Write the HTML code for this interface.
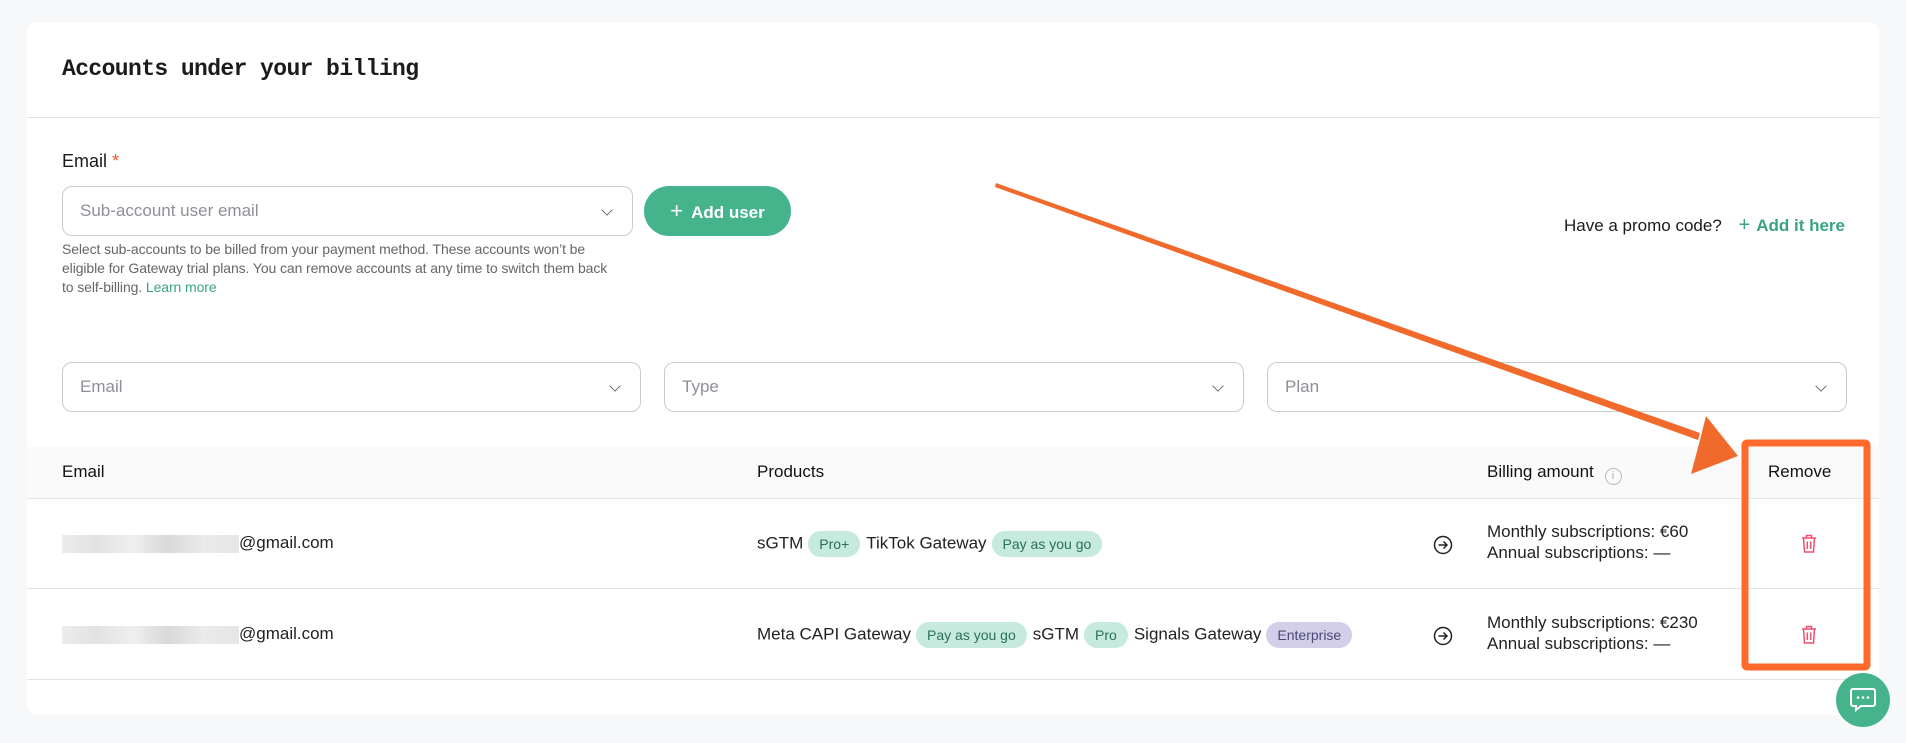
<!DOCTYPE html>
<html><head><meta charset="utf-8"><style>
*{box-sizing:border-box;margin:0;padding:0}
body{width:1906px;height:743px;background:#f7f8fa;font-family:"Liberation Sans",sans-serif;color:#1b1b1b;position:relative;overflow:hidden}
.card{position:absolute;left:27px;top:22px;width:1852px;height:693px;background:#fff;border-radius:10px}
.abs{position:absolute}
.title{left:35px;top:34px;font-family:"Liberation Mono",monospace;font-weight:bold;font-size:23px;letter-spacing:-0.6px}
.sep{left:0;right:0;height:1px;background:#e3e5e8}
.input{border:1px solid #c9cbcf;border-radius:10px;height:50px;font-size:17px;color:#8d9096;padding-left:17px;line-height:48px}
.chev{position:absolute;right:20px;top:18px;width:10px;height:10px;border-right:1.6px solid #555;border-bottom:1.6px solid #555;transform:rotate(45deg) scale(.8)}
.help{font-size:14px;color:#666;line-height:19px;width:555px;letter-spacing:-0.1px}
.btn{background:#45b48c;color:#fff;border-radius:25px;font-weight:bold;font-size:17px;text-align:center;line-height:49px}
.th{font-size:17px;color:#111}
.td{font-size:17px;color:#222}
.badge{display:inline-block;height:26px;line-height:26px;border-radius:13px;padding:0 11px;font-size:14px;background:#c6eadd;color:#2a7058;margin:0 6px 0 5px;vertical-align:middle}
.ent{background:#d3cfe9;color:#4b4878}
.blur{display:inline-block;width:177px;height:18px;background:linear-gradient(90deg,#ececec,#e2e2e2 20%,#efefef 40%,#d9d9d9 60%,#ebebeb 80%,#e6e6e6);vertical-align:middle}
</style></head><body>
<div class="card">
  <div class="abs title">Accounts under your billing</div>
  <div class="abs sep" style="top:95px"></div>
  <div class="abs" style="left:35px;top:129px;font-size:18px">Email <span style="color:#e85a2a">*</span></div>
  <div class="abs input" style="left:35px;top:164px;width:571px">Sub-account user email<div class="chev"></div></div>
  <div class="abs btn" style="left:617px;top:164px;width:147px;height:50px"><span style="font-weight:normal;font-size:22px;margin-right:8px">+</span>Add user</div>
  <div class="abs help" style="left:35px;top:218px">Select sub-accounts to be billed from your payment method. These accounts won’t be eligible for Gateway trial plans. You can remove accounts at any time to switch them back to self-billing. <span style="color:#3aa47f">Learn more</span></div>
  <div class="abs" style="right:34px;top:192px;font-size:17px">Have a promo code? <span style="color:#3aa47f;font-weight:bold;margin-left:12px"><span style="font-weight:normal;font-size:20px;margin-right:6px">+</span>Add it here</span></div>
  <div class="abs input" style="left:35px;top:340px;width:579px">Email<div class="chev"></div></div>
  <div class="abs input" style="left:637px;top:340px;width:580px">Type<div class="chev"></div></div>
  <div class="abs input" style="left:1240px;top:340px;width:580px">Plan<div class="chev"></div></div>
  <div class="abs" style="left:0;right:0;top:425px;height:51px;background:#fafafa"></div>
  <div class="abs sep" style="top:476px"></div>
  <div class="abs th" style="left:35px;top:440px">Email</div>
  <div class="abs th" style="left:730px;top:440px">Products</div>
  <div class="abs th" style="left:1460px;top:440px">Billing amount <span style="display:inline-block;width:17px;height:17px;border:1.3px solid #bbb;border-radius:50%;font-size:11px;color:#aaa;text-align:center;line-height:15px;vertical-align:-2px;margin-left:6px">i</span></div>
  <div class="abs th" style="left:1741px;top:440px">Remove</div>
  <div class="abs td" style="left:35px;top:511px"><span class="blur"></span>@gmail.com</div>
  <div class="abs td" style="left:730px;top:509px">sGTM<span class="badge">Pro+</span>TikTok Gateway<span class="badge">Pay as you go</span></div>
  <div class="abs sep" style="top:566px"></div>
  <div class="abs td" style="left:35px;top:602px"><span class="blur"></span>@gmail.com</div>
  <div class="abs td" style="left:730px;top:600px">Meta CAPI Gateway<span class="badge">Pay as you go</span>sGTM<span class="badge">Pro</span>Signals Gateway<span class="badge ent">Enterprise</span></div>
  <div class="abs sep" style="top:657px"></div>
  <div class="abs td" style="left:1460px;top:499px;line-height:21px">Monthly subscriptions: €60<br>Annual subscriptions: —</div>
  <div class="abs td" style="left:1460px;top:590px;line-height:21px">Monthly subscriptions: €230<br>Annual subscriptions: —</div>
  <svg class="abs" style="left:1406px;top:513px" width="20" height="20" viewBox="0 0 20 20"><circle cx="10" cy="10" r="8.5" fill="none" stroke="#222" stroke-width="1.5"/><path d="M5.5 10h8M10.5 6.5l3.5 3.5-3.5 3.5" fill="none" stroke="#222" stroke-width="1.5"/></svg>
  <svg class="abs" style="left:1406px;top:604px" width="20" height="20" viewBox="0 0 20 20"><circle cx="10" cy="10" r="8.5" fill="none" stroke="#222" stroke-width="1.5"/><path d="M5.5 10h8M10.5 6.5l3.5 3.5-3.5 3.5" fill="none" stroke="#222" stroke-width="1.5"/></svg>
  <svg class="abs" style="left:1772px;top:511px" width="20" height="22" viewBox="0 0 20 22"><path d="M3 5h14M7.5 5V2.5h5V5M4.5 5l1 14h9l1-14M8.3 8.5v7.5M11.7 8.5v7.5" fill="none" stroke="#f0506e" stroke-width="1.5"/></svg>
  <svg class="abs" style="left:1772px;top:602px" width="20" height="22" viewBox="0 0 20 22"><path d="M3 5h14M7.5 5V2.5h5V5M4.5 5l1 14h9l1-14M8.3 8.5v7.5M11.7 8.5v7.5" fill="none" stroke="#f0506e" stroke-width="1.5"/></svg>
</div>
<svg class="abs" style="left:0;top:0" width="1906" height="743">
  <polygon points="996,183 1700,433 1698,440 995,187" fill="#f06a2c"/>
  <polygon points="1738,456 1691,474 1700,440 1706,416" fill="#f06a2c"/>
  <rect x="1745" y="443" width="122" height="224" fill="none" stroke="#ff6a2c" stroke-width="7" rx="2"/>
</svg>
<div class="abs" style="left:1836px;top:673px;width:54px;height:54px;border-radius:50%;background:#45b48c"></div>
<svg class="abs" style="left:1849px;top:687px" width="28" height="26" viewBox="0 0 28 26"><path d="M4 2h20a2 2 0 0 1 2 2v13a2 2 0 0 1-2 2H12l-5 4v-4H4a2 2 0 0 1-2-2V4a2 2 0 0 1 2-2z" fill="none" stroke="#fff" stroke-width="2"/><circle cx="9" cy="10.5" r="1.3" fill="#fff"/><circle cx="14" cy="10.5" r="1.3" fill="#fff"/><circle cx="19" cy="10.5" r="1.3" fill="#fff"/></svg>
</body></html>
